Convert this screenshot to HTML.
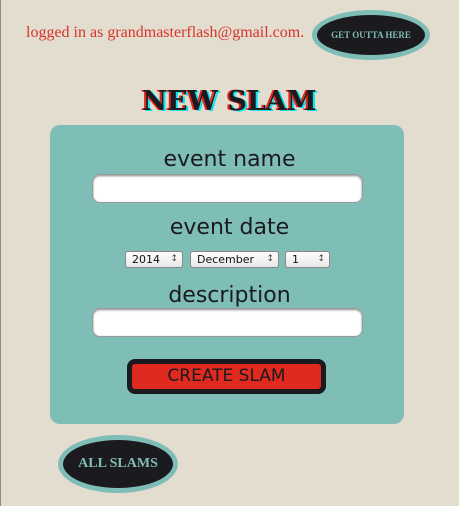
<!DOCTYPE html>
<html><head><style>
body{margin:0;width:459px;height:506px;background:#e3ddd0;position:relative;overflow:hidden;font-family:"DejaVu Sans","Liberation Sans",sans-serif;}
.edge{position:absolute;left:0;top:0;width:1px;height:506px;background:#8a8a8a}
.a{position:absolute}
.login{left:26px;top:24px;color:#d8342a;font-family:"Liberation Serif",serif;font-size:16px}
.oval{border-radius:50%;background:#1b1a1e;border:5px solid #7fbdb7;color:#7fbdb7;font-family:"Liberation Serif",serif;font-weight:bold;display:flex;align-items:center;justify-content:center;box-sizing:border-box}
h1{position:absolute;left:0;width:459px;top:86px;margin:0;text-align:center;font-family:"DejaVu Serif","Liberation Serif",serif;font-size:27px;font-weight:bold;color:#1b1a1e;text-shadow:-2px 0 #e8201a,2px 1px #00e5f0;}
.panel{left:50px;top:125px;width:354px;height:299px;background:#7fbdb7;border-radius:10px}
.lbl{left:0;width:459px;text-align:center;font-size:22px;color:#1b1a1e}
.inp{left:92px;width:271px;height:29px;background:#fff;border:1px solid #999;border-radius:8px;box-sizing:border-box;box-shadow:inset 0 1px 2px #888}
.sel{top:251px;height:17px;background:linear-gradient(#fff,#e8e8e8);border:1px solid #888;border-radius:3px;box-sizing:border-box;font-size:11px;padding-left:6px;line-height:15px;color:#111}
.sel:after{content:"\2195";position:absolute;right:4px;top:0;font-size:9px;color:#444}
.btn{left:127px;top:359px;width:199px;height:35px;background:#e0291f;border:5px solid #1b1a1e;border-radius:8px;box-sizing:border-box;text-align:center;font-size:17px;line-height:25px;color:#1b1a1e}
</style></head><body>
<div class="edge"></div>
<div class="a login">logged in as grandmasterflash@gmail.com.</div>
<div class="a oval" style="left:312px;top:10px;width:118px;height:50px;font-size:9px;">GET OUTTA HERE</div>
<h1>NEW SLAM</h1>
<div class="a panel"></div>
<div class="a lbl" style="top:147px">event name</div>
<div class="a inp" style="top:174px"></div>
<div class="a lbl" style="top:215px">event date</div>
<div class="a sel" style="left:125px;width:58px">2014</div>
<div class="a sel" style="left:190px;width:89px">December</div>
<div class="a sel" style="left:285px;width:45px">1</div>
<div class="a lbl" style="top:283px">description</div>
<div class="a inp" style="top:308px"></div>
<div class="a btn">CREATE SLAM</div>
<div class="a oval" style="left:58px;top:435px;width:120px;height:58px;font-size:14px;">ALL SLAMS</div>
</body></html>
